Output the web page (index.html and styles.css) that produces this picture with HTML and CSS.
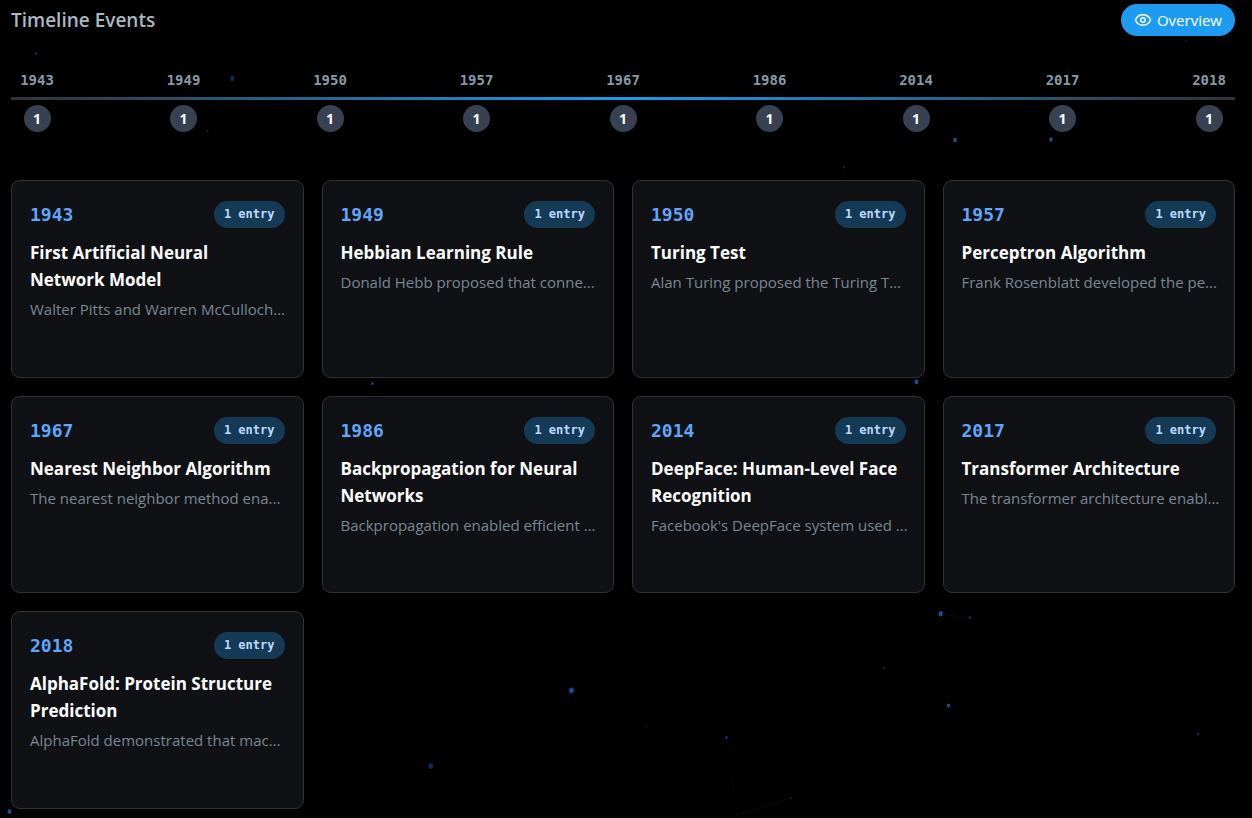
FILE: index.html
```
<!DOCTYPE html>
<html lang="en">
<head>
    <meta charset="UTF-8">
    <meta name="viewport" content="width=device-width, initial-scale=1.0">
    <title>Timeline Events</title>
    <link rel="stylesheet" href="styles.css">
</head>
<body>
    <!-- Particle background -->
    <svg class="particles" width="1252" height="818" aria-hidden="true">
        <g stroke="#050607" stroke-width="1" fill="none">
            <path d="M232 78L207 131M948 706L940 614M727 738L736 815M844 167L846 190"/>
            <path stroke="#0a0b0e" d="M940 614L970 618M736 815L791 798"/>
        </g>
        <g fill="#1f4a8c">
            <ellipse cx="955" cy="140" rx="2" ry="2.3"/>
            <ellipse cx="1051" cy="139.5" rx="1.8" ry="2.2"/>
            <ellipse cx="916.5" cy="382" rx="2" ry="2.4"/>
            <ellipse cx="372.5" cy="383.5" rx="1.3" ry="1.6"/>
            <ellipse cx="940.7" cy="613.8" rx="2.1" ry="2.7"/>
            <ellipse cx="948.5" cy="705.5" rx="1.6" ry="2"/>
            <ellipse cx="571.5" cy="690.3" rx="2.3" ry="2.9"/>
            <ellipse cx="726.5" cy="737.5" rx="1" ry="1.3"/>
            <ellipse cx="1198" cy="734" rx="1" ry="1"/>
            <ellipse cx="36" cy="53.5" rx="1" ry="1"/>
            <ellipse cx="9.5" cy="811.5" rx="2" ry="2.5"/>
        </g>
        <g fill="#11284b">
            <ellipse cx="232.3" cy="78.5" rx="2.1" ry="2.7"/>
            <ellipse cx="430.7" cy="766" rx="2.4" ry="3"/>
            <ellipse cx="970" cy="617.7" rx="1.4" ry="1.4"/>
            <ellipse cx="791.5" cy="798" rx="1" ry="1"/>
            <ellipse cx="207.5" cy="131" rx="1" ry="1"/>
            <ellipse cx="844" cy="167" rx="1" ry="1.3"/>
            <ellipse cx="884" cy="668" rx="1" ry="1"/>
            <ellipse cx="646" cy="727" rx="0.7" ry="0.7"/>
            <ellipse cx="1069" cy="70.5" rx="0.8" ry="0.8"/>
            <ellipse cx="1186" cy="41" rx="1" ry="0.8"/>
        </g>
    </svg>

    <div class="main">
        <div class="header">
            <h1>Timeline Events</h1>
            <button type="button" class="overview-btn">
                <svg class="eye" viewBox="0 0 24 24" width="18" height="18" fill="none" stroke="currentColor" stroke-width="2" stroke-linecap="round" stroke-linejoin="round" aria-hidden="true">
                    <path d="M2.06 12.35a1 1 0 0 1 0-.7 10.75 10.75 0 0 1 19.88 0 1 1 0 0 1 0 .7 10.75 10.75 0 0 1-19.88 0"/>
                    <circle cx="12" cy="12" r="3"/>
                </svg>
                Overview
            </button>
        </div>

        <div class="timeline">
            <ol class="years">
                <li>1943</li>
                <li>1949</li>
                <li>1950</li>
                <li>1957</li>
                <li>1967</li>
                <li>1986</li>
                <li>2014</li>
                <li>2017</li>
                <li>2018</li>
            </ol>
            <div class="line"></div>
            <ol class="counts">
                <li><span>1</span></li>
                <li><span>1</span></li>
                <li><span>1</span></li>
                <li><span>1</span></li>
                <li><span>1</span></li>
                <li><span>1</span></li>
                <li><span>1</span></li>
                <li><span>1</span></li>
                <li><span>1</span></li>
            </ol>
        </div>

        <div class="cards">
            <div class="card">
                <div class="card-top"><span class="year">1943</span><span class="badge">1 entry</span></div>
                <h2>First Artificial Neural Network Model</h2>
                <p>Walter Pitts and Warren McCulloch...</p>
            </div>
            <div class="card">
                <div class="card-top"><span class="year">1949</span><span class="badge">1 entry</span></div>
                <h2>Hebbian Learning Rule</h2>
                <p>Donald Hebb proposed that conne...</p>
            </div>
            <div class="card">
                <div class="card-top"><span class="year">1950</span><span class="badge">1 entry</span></div>
                <h2>Turing Test</h2>
                <p>Alan Turing proposed the Turing T...</p>
            </div>
            <div class="card">
                <div class="card-top"><span class="year">1957</span><span class="badge">1 entry</span></div>
                <h2>Perceptron Algorithm</h2>
                <p>Frank Rosenblatt developed the pe...</p>
            </div>
            <div class="card">
                <div class="card-top"><span class="year">1967</span><span class="badge">1 entry</span></div>
                <h2>Nearest Neighbor Algorithm</h2>
                <p>The nearest neighbor method ena...</p>
            </div>
            <div class="card">
                <div class="card-top"><span class="year">1986</span><span class="badge">1 entry</span></div>
                <h2>Backpropagation for Neural Networks</h2>
                <p>Backpropagation enabled efficient ...</p>
            </div>
            <div class="card">
                <div class="card-top"><span class="year">2014</span><span class="badge">1 entry</span></div>
                <h2>DeepFace: Human-Level Face Recognition</h2>
                <p>Facebook's DeepFace system used ...</p>
            </div>
            <div class="card">
                <div class="card-top"><span class="year">2017</span><span class="badge">1 entry</span></div>
                <h2>Transformer Architecture</h2>
                <p>The transformer architecture enabl...</p>
            </div>
            <div class="card">
                <div class="card-top"><span class="year">2018</span><span class="badge">1 entry</span></div>
                <h2>AlphaFold: Protein Structure Prediction</h2>
                <p>AlphaFold demonstrated that mac...</p>
            </div>
        </div>
    </div>
</body>
</html>
```
FILE: styles.css
```
* {
    box-sizing: border-box;
}

body {
    margin: 0;
    background-color: #000;
    color: #fff;
    font-family: "Open Sans", "Noto Sans", sans-serif;
}

.particles {
    position: absolute;
    top: 0;
    left: 0;
    z-index: -1;
}

.main {
    display: flex;
    flex-direction: column;
    min-height: 100vh;
    padding: 4px 17px 9px 11px;
}

h1,
h2,
p,
ol {
    margin: 0;
    padding: 0;
}

.header {
    display: flex;
    justify-content: space-between;
    align-items: center;
    height: 32px;
}

h1 {
    font-size: 19px;
    font-weight: 600;
    color: #aab8c2;
}

.overview-btn {
    display: flex;
    align-items: center;
    gap: 5px;
    height: 32px;
    padding: 0 13px;
    border: none;
    border-radius: 16px;
    background-color: #1d9bf0;
    color: #fff;
    font-family: inherit;
    font-size: 15px;
    cursor: pointer;
}

.timeline {
    margin: 32px 0 48px;
}

.years,
.counts {
    display: flex;
    justify-content: space-between;
    list-style: none;
}

.years li,
.counts li {
    width: 52px;
    text-align: center;
}

.years li {
    font-family: "DejaVu Sans Mono", monospace;
    font-size: 14px;
    font-weight: 700;
    line-height: 24px;
    color: #8899a6;
}

.line {
    height: 3px;
    margin: 5px 0;
    background: linear-gradient(to right, #2f3336, #1d9bf0, #2f3336);
}

.counts li {
    display: flex;
    justify-content: center;
}

.counts span {
    width: 27px;
    height: 27px;
    border-radius: 50%;
    background-color: #374151;
    font-size: 14px;
    font-weight: 700;
    line-height: 27px;
}

.cards {
    flex: 1;
    display: grid;
    grid-template-columns: repeat(4, minmax(0, 1fr));
    grid-auto-rows: 1fr;
    gap: 18px;
}

.card {
    padding: 20px 18px;
    border: 1px solid #2f3336;
    border-radius: 9px;
    background-color: #101115;
}

.card-top {
    display: flex;
    justify-content: space-between;
    align-items: center;
    margin-bottom: 11px;
}

.year {
    font-family: "DejaVu Sans Mono", monospace;
    font-size: 18px;
    font-weight: 700;
    color: #60a5fa;
}

.badge {
    padding: 0 10px;
    border-radius: 14px;
    background-color: #143a56;
    color: #bfdbfe;
    font-family: "DejaVu Sans Mono", monospace;
    font-size: 12px;
    font-weight: 700;
    line-height: 27px;
}

.card h2 {
    font-size: 17px;
    font-weight: 700;
    line-height: 27px;
}

.card p {
    margin-top: 4px;
    color: #788894;
    font-size: 15px;
    line-height: 24px;
    white-space: nowrap;
}
```
